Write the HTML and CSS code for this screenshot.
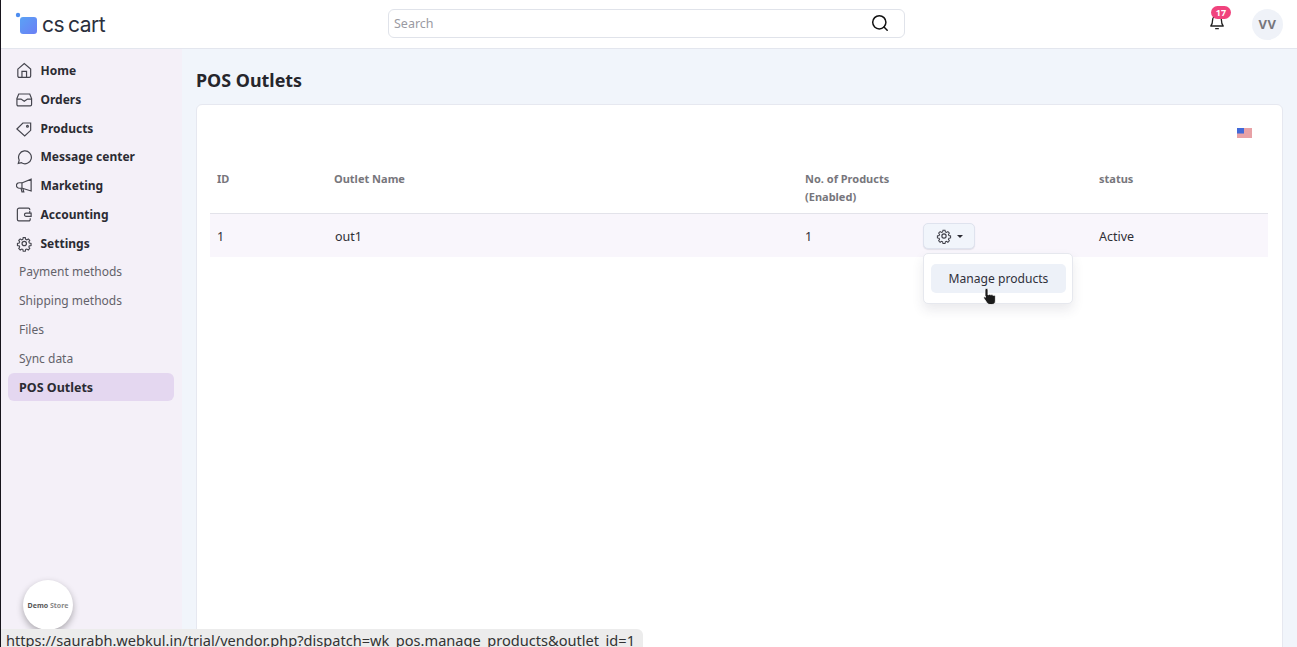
FILE: index.html
```html
<!DOCTYPE html>
<html lang="en">
<head>
<meta charset="utf-8">
<title>POS Outlets</title>
<link rel="stylesheet" href="styles.css">
</head>
<body>
<div class="app">
  <header class="topbar">
    <div class="logo">
      <svg class="logo-mark" width="24" height="24" viewBox="0 0 24 24"><defs><linearGradient id="lg" x1="0" y1="0" x2="1" y2="1"><stop offset="0" stop-color="#5aa2f5"/><stop offset="1" stop-color="#6b7ff5"/></linearGradient></defs><circle cx="3" cy="3" r="2.200" fill="#4d8df0"/><rect x="5" y="5" width="17" height="17" rx="3" fill="url(#lg)"/></svg>
      <span class="logo-text">cs cart</span>
    </div>
    <div class="search">
      <span class="search-ph">Search</span>
      <svg width="18" height="18" viewBox="0 0 18 18" fill="none" stroke="#111" stroke-width="1.5"><circle cx="8.300" cy="8.300" r="6.600"/><path d="M13 13l3.200 3.200" stroke-linecap="round"/></svg>
    </div>
    <div class="top-right">
      <div class="bell">
        <svg width="16" height="18" viewBox="0 0 18 20" fill="none" stroke="#222" stroke-width="1.5"><path d="M4 8a5 5 0 0 1 10 0c0 4 1 5.500 2 6.500H2c1-1 2-2.500 2-6.500z" stroke-linejoin="round"/><path d="M7.500 17.500h3" stroke-linecap="round"/></svg>
        <span class="badge">17</span>
      </div>
      <div class="avatar">VV</div>
    </div>
  </header>
  <div class="body">
    <aside class="sidebar">
      <nav class="nav">
        <a class="nav-item"><svg class="ico" viewBox="0 0 18 18"><path d="M2 7.500L9 1.500l7 6V15a1.500 1.500 0 0 1-1.500 1.500h-11A1.500 1.500 0 0 1 2 15z"/><path d="M6.500 16.500V10h5v6.500"/></svg>Home</a>
        <a class="nav-item"><svg class="ico" viewBox="0 0 18 18"><path d="M1 8l2-5h12l2 5v6.500a1.500 1.500 0 0 1-1.500 1.500h-13A1.500 1.500 0 0 1 1 14.500z"/><path d="M1 8.500h4.500L9 11l3.500-2.500H17"/></svg>Orders</a>
        <a class="nav-item"><svg class="ico" viewBox="0 0 18 18"><path d="M1 9.500L7.500 3H16v8l-6.500 6z"/><circle cx="12.500" cy="6.500" r="1"/></svg>Products</a>
        <a class="nav-item"><svg class="ico" viewBox="0 0 18 18"><path d="M2.500 16.500l1-3.500A7 7 0 1 1 6 15.800z"/></svg>Message center</a>
        <a class="nav-item"><svg class="ico" viewBox="0 0 18 18"><path d="M16.500 2v13L7 12H3.500a2.500 2.500 0 0 1 0-6H7z"/><path d="M6.500 6v6M5.500 12l1 4h2l-1-3.500"/></svg>Marketing</a>
        <a class="nav-item"><svg class="ico" viewBox="0 0 18 18"><path d="M15 4V3.500A1.500 1.500 0 0 0 13.500 2H3.500A2 2 0 0 0 1.500 4v10.500A1.500 1.500 0 0 0 3 16h11a1.500 1.500 0 0 0 1.500-1.500V13"/><path d="M11 7.500h5.500v3.500H11a1.750 1.750 0 0 1 0-3.500z"/><path d="M15 7.500V5"/></svg>Accounting</a>
        <a class="nav-item"><svg class="ico ico-gear" viewBox="0 0 24 24"><use href="#gear"/></svg>Settings</a>
        <a class="sub-item">Payment methods</a>
        <a class="sub-item">Shipping methods</a>
        <a class="sub-item">Files</a>
        <a class="sub-item">Sync data</a>
        <a class="sub-item active">POS Outlets</a>
      </nav>
      <div class="store"><span class="store-text">Demo <span class="store-light">Store</span></span></div>
    </aside>
    <main class="main">
      <h1 class="title">POS Outlets</h1>
      <section class="card">
        <div class="card-top">
          <svg class="flag" width="15" height="10" viewBox="0 0 15 10"><rect width="15" height="10" fill="#f3d9dc"/><path d="M0 1h15M0 3h15M0 5h15M0 7h15M0 9h15" stroke="#dc6b70" stroke-width="1"/><rect width="7" height="5.500" fill="#4169d8"/></svg>
        </div>
        <table class="table">
          <colgroup><col class="c1"><col class="c2"><col class="c3"><col class="c4"></colgroup>
          <thead>
            <tr><th>ID</th><th>Outlet Name</th><th>No. of Products<br>(Enabled)</th><th>status</th></tr>
          </thead>
          <tbody>
            <tr>
              <td>1</td>
              <td class="name">out1</td>
              <td>
                <div class="count-cell">
                  <span class="count">1</span>
                  <div class="action">
                    <button class="gear-btn">
                      <svg width="16" height="16" viewBox="0 0 24 24" class="gear-svg"><use href="#gear"/></svg>
                      <span class="caret"></span>
                    </button>
                    <div class="menu"><a class="menu-item">Manage products</a></div>
                    <svg class="cursor" width="16" height="19" viewBox="0 0 16 19"><path d="M4.500 1.500c.9 0 1.500.6 1.500 1.500v5l.5-.1c.5-1 2-.8 2.300.2.600-.8 2-.6 2.300.4.700-.6 2.300-.2 2.300 1.200V14c0 2-1.300 3.500-3.500 3.500H8c-1.600 0-2.500-.8-3.300-2L2 11.500c-.8-1.300.8-2.700 2-1.500l-1-.1V3c0-.9.600-1.500 1.500-1.500z" fill="#1b1b1b" stroke="#fff" stroke-width=".8"/></svg>
                  </div>
                </div>
              </td>
              <td>Active</td>
            </tr>
          </tbody>
        </table>
      </section>
    </main>
  </div>
  <div class="statusbar">https://saurabh.webkul.in/trial/vendor.php?dispatch=wk_pos.manage_products&amp;outlet_id=1</div>
</div>
<svg class="defs" width="0" height="0"><defs><g id="gear"><circle cx="12" cy="12" r="3.200"/><path d="M10.300 2.500h3.400l.6 2.800 1.800.8 2.400-1.500 2.400 2.400-1.500 2.400.8 1.800 2.800.6v3.400l-2.800.6-.8 1.800 1.500 2.400-2.400 2.400-2.400-1.500-1.800.8-.6 2.800h-3.400l-.6-2.800-1.800-.8-2.400 1.500-2.400-2.400 1.500-2.400-.8-1.800-2.800-.6v-3.400l2.800-.6.800-1.800-1.500-2.400 2.400-2.400 2.400 1.500 1.800-.8z" transform="translate(1.200 1.200) scale(.9)"/></g></defs></svg>
</body>
</html>
```
FILE: styles.css
```css
* { box-sizing: border-box; }
html, body { margin: 0; height: 100%; overflow: hidden; }
body { font-family: "Noto Sans", "Open Sans", sans-serif; font-size: 13px; color: #2b2b33; background: #f1f5fb; }
.app { height: 647px; display: flex; flex-direction: column; border-left: 1px solid #17141c; position: relative; }
.topbar { height: 49px; flex: none; background: #fff; border-bottom: 1px solid #e3e6ee; display: flex; align-items: center; padding: 0 14px 0 14px; position: relative; }
.logo { width: 373px; display: flex; align-items: center; gap: 3px; }
.logo-mark { flex: none; }
.logo-text { font-family: Inter, sans-serif; font-size: 21px; color: #2b2f3c; letter-spacing: -.5px; word-spacing: -1.5px; }
.search { width: 517px; height: 29px; margin-bottom: 2px; border: 1px solid #e0e3ea; border-radius: 6px; display: flex; align-items: center; justify-content: space-between; padding: 0 15px 0 5px; }
.search-ph { color: #9a9aa2; font-size: 12.5px; }
.top-right { margin-left: auto; display: flex; align-items: center; gap: 27px; }
.bell { position: relative; width: 16px; height: 20px; margin-bottom: 3px; }
.badge { position: absolute; top: -7px; left: 2px; width: 20px; height: 13px; border-radius: 7px; background: #f0437d; color: #fff; font-size: 9px; font-weight: 700; line-height: 13px; text-align: center; }
.avatar { width: 31px; height: 31px; border-radius: 50%; background: #eff2f8; color: #77767c; font-weight: 700; font-size: 13px; display: flex; align-items: center; justify-content: center; letter-spacing: .5px; }
.body { flex: 1; display: flex; min-height: 0; }
.sidebar { width: 181px; flex: none; background: #f4f0f8; padding: 7.25px 7px 0 7px; position: relative; }
.nav { display: flex; flex-direction: column; }
.nav-item { height: 28.75px; display: flex; align-items: center; gap: 8px; padding-left: 8px; font-weight: 700; font-size: 12px; color: #2b2b33; }
.ico { width: 16.5px; height: 17px; flex: none; fill: none; stroke: #45454e; stroke-width: 1.3; }
.ico-gear { stroke-width: 1.8; }
.sub-item { height: 28.75px; display: flex; align-items: center; padding-left: 11px; font-size: 12px; color: #63626a; }
.sub-item.active { background: #e4d7f0; border-radius: 6px; color: #2b2b33; font-weight: 700; font-size: 12.5px; width: 166px; padding-top: 1px; }
.store { position: absolute; left: 22px; bottom: 17px; width: 50px; height: 50px; border-radius: 50%; background: #fff; box-shadow: 0 3px 7px rgba(0,0,0,.3); display: flex; align-items: center; justify-content: center; }
.store-text { font-size: 7px; font-weight: 700; color: #555; white-space: nowrap; }
.store-light { color: #888; }
.main { flex: 1; min-width: 0; padding: 0 14px 0 14px; }
.title { margin: 19px 0 0; font-size: 17.9px; line-height: 25px; font-weight: 700; color: #26262c; }
.card { margin-top: 11px; height: 560px; background: #fff; border: 1px solid #e6e8f0; border-radius: 6px; padding: 0 13px; }
.card-top { height: 50px; display: flex; justify-content: flex-end; align-items: flex-start; padding: 23px 17px 0 0; }
.flag { display: block; }
.table { width: 1058px; border-collapse: collapse; table-layout: fixed; }
.c1 { width: 117px; } .c2 { width: 471px; } .c3 { width: 294px; } .c4 { width: 176px; }
th { text-align: left; font-size: 11px; font-weight: 700; color: #77767c; line-height: 18px; padding: 15px 7px 7px; vertical-align: top; height: 58px; border-bottom: 1px solid #e3e3ea; }
td { height: 43px; padding: 2px 7px 0; background: #f9f6fc; font-size: 12.5px; color: #2f2f36; }
td.name { padding-left: 8px; }
.count-cell { display: flex; align-items: center; }
.count { width: 118px; }
.action { position: relative; }
.gear-btn { width: 52px; height: 26px; border: 1px solid #dfe3ee; border-radius: 5px; background: #f1f5fb; box-shadow: 0 1px 1px rgba(60,60,90,.12); display: flex; align-items: center; justify-content: center; gap: 5px; padding: 0; }
.gear-svg { fill: none; stroke: #3d3d46; stroke-width: 1.7; }
.caret { width: 0; height: 0; border-left: 3.500px solid transparent; border-right: 3.500px solid transparent; border-top: 3.500px solid #2b2b33; }
.menu { position: absolute; left: 0; top: 30px; width: 150px; height: 51px; background: #fff; border: 1px solid #e6e8ee; border-radius: 5px; box-shadow: 0 6px 12px rgba(50,50,80,.1); padding: 10px 6px 10px 7px; z-index: 2; }
.menu-item { display: flex; height: 29px; align-items: center; justify-content: center; background: #edf1f8; border-radius: 5px; font-size: 12.1px; color: #2f2f3a; }
.cursor { position: absolute; left: 59px; top: 64px; z-index: 3; }
.statusbar { position: absolute; left: 0; bottom: -4px; height: 22px; width: 642px; background: #ececec; border-radius: 0 6px 0 0; padding-left: 5px; font-size: 14.6px; line-height: 22px; color: #333; white-space: nowrap; overflow: hidden; z-index: 5; }
.defs { position: absolute; }
```
